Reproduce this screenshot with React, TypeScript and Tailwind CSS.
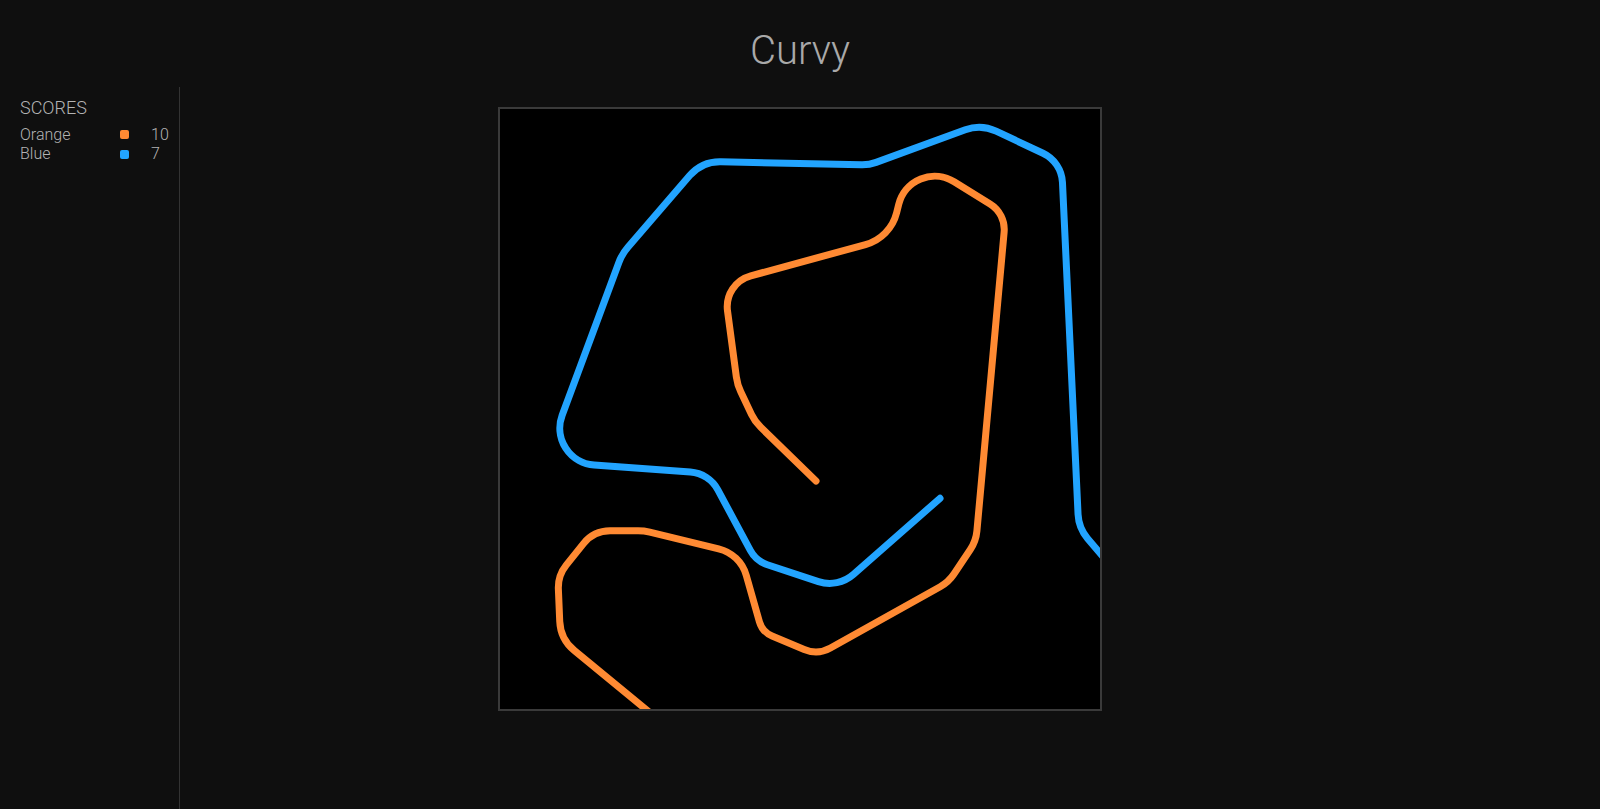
import React from "react";

type Pt = [number, number];

function roundedPath(pts: Pt[], radii: number[]): string {
  let d = `M ${pts[0][0]} ${pts[0][1]}`;
  for (let i = 1; i < pts.length - 1; i++) {
    const [ax, ay] = pts[i - 1];
    const [px, py] = pts[i];
    const [bx, by] = pts[i + 1];
    let d1x = px - ax, d1y = py - ay;
    let d2x = bx - px, d2y = by - py;
    const l1 = Math.hypot(d1x, d1y), l2 = Math.hypot(d2x, d2y);
    d1x /= l1; d1y /= l1; d2x /= l2; d2y /= l2;
    const cos = Math.max(-1, Math.min(1, d1x * d2x + d1y * d2y));
    const theta = Math.acos(cos);
    const r = radii[i - 1];
    const t = r * Math.tan(theta / 2);
    const sx = px - d1x * t, sy = py - d1y * t;
    const ex = px + d2x * t, ey = py + d2y * t;
    const cross = d1x * d2y - d1y * d2x;
    const sweep = cross > 0 ? 1 : 0;
    d += ` L ${sx.toFixed(2)} ${sy.toFixed(2)} A ${r} ${r} 0 0 ${sweep} ${ex.toFixed(2)} ${ey.toFixed(2)}`;
  }
  const last = pts[pts.length - 1];
  d += ` L ${last[0]} ${last[1]}`;
  return d;
}

const bluePts: Pt[] = [
  [1112.7, 568],
  [1078.7, 528],
  [1061.5, 162],
  [981, 124],
  [869, 165],
  [702, 161.3],
  [622, 254],
  [545, 461.5],
  [709, 473.3],
  [756, 561],
  [838, 588],
  [940, 498.3],
];
const blueR = [40, 34, 40, 40, 40, 50, 37, 34, 30, 36];

const orangePts: Pt[] = [
  [816, 481],
  [755, 421.7],
  [737.4, 384.7],
  [723.8, 283.2],
  [890.4, 237.8],
  [911, 155],
  [1005.8, 213.7],
  [976, 541],
  [948.6, 582],
  [817.7, 655.1],
  [762.3, 631.9],
  [740.2, 554],
  [644, 530.8],
  [593.7, 530.8],
  [557.8, 575.7],
  [560.5, 639.2],
  [671, 730],
];
const orangeR = [45, 50, 32, 44, 37, 30, 40, 40, 30, 22, 38, 50, 34, 36, 40];

const players = [
  { name: "Orange", color: "bg-[#ff8a33]", score: 10 },
  { name: "Blue", color: "bg-[#22a4ff]", score: 7 },
];

export default function App() {
  return (
    <div className="min-h-screen bg-[#0f0f0f] text-[#b3b3b3] font-['Roboto','Noto_Sans',sans-serif]">
      <header className="h-[87px] pt-[27px] text-center">
        <h1 className="text-[40px] leading-[47px] font-light text-[#a9a9a9]">Curvy</h1>
      </header>
      <div className="grid grid-cols-[180px_1fr_180px] min-h-[722px]">
        <aside className="border-r border-[#333333] pl-5 pt-[10px]">
          <h2 className="text-[18px] leading-[21px] font-light">SCORES</h2>
          <table className="mt-[7px] text-[16px] leading-[19.4px] font-light border-collapse">
            <tbody>
              {players.map((p) => (
                <tr key={p.name} className="h-[19.4px]">
                  <td className="w-[100px] p-0">{p.name}</td>
                  <td className="w-[31px] p-0 align-middle">
                    <div className={`w-[9px] h-[9px] rounded-[2px] ${p.color}`} />
                  </td>
                  <td className="p-0">{p.score}</td>
                </tr>
              ))}
            </tbody>
          </table>
        </aside>
        <main className="flex justify-center items-start pt-[20px]">
          <div className="w-[604px] h-[604px] border-2 border-[#3a3a3a] bg-black overflow-hidden">
            <svg width="600" height="600" viewBox="500 109 600 600" className="block">
              <path
                d={roundedPath(bluePts, blueR)}
                fill="none"
                stroke="#22a4ff"
                strokeWidth={7}
                strokeLinecap="round"
                strokeLinejoin="round"
              />
              <path
                d={roundedPath(orangePts, orangeR)}
                fill="none"
                stroke="#ff8a33"
                strokeWidth={7}
                strokeLinecap="round"
                strokeLinejoin="round"
              />
            </svg>
          </div>
        </main>
        <div />
      </div>
    </div>
  );
}
